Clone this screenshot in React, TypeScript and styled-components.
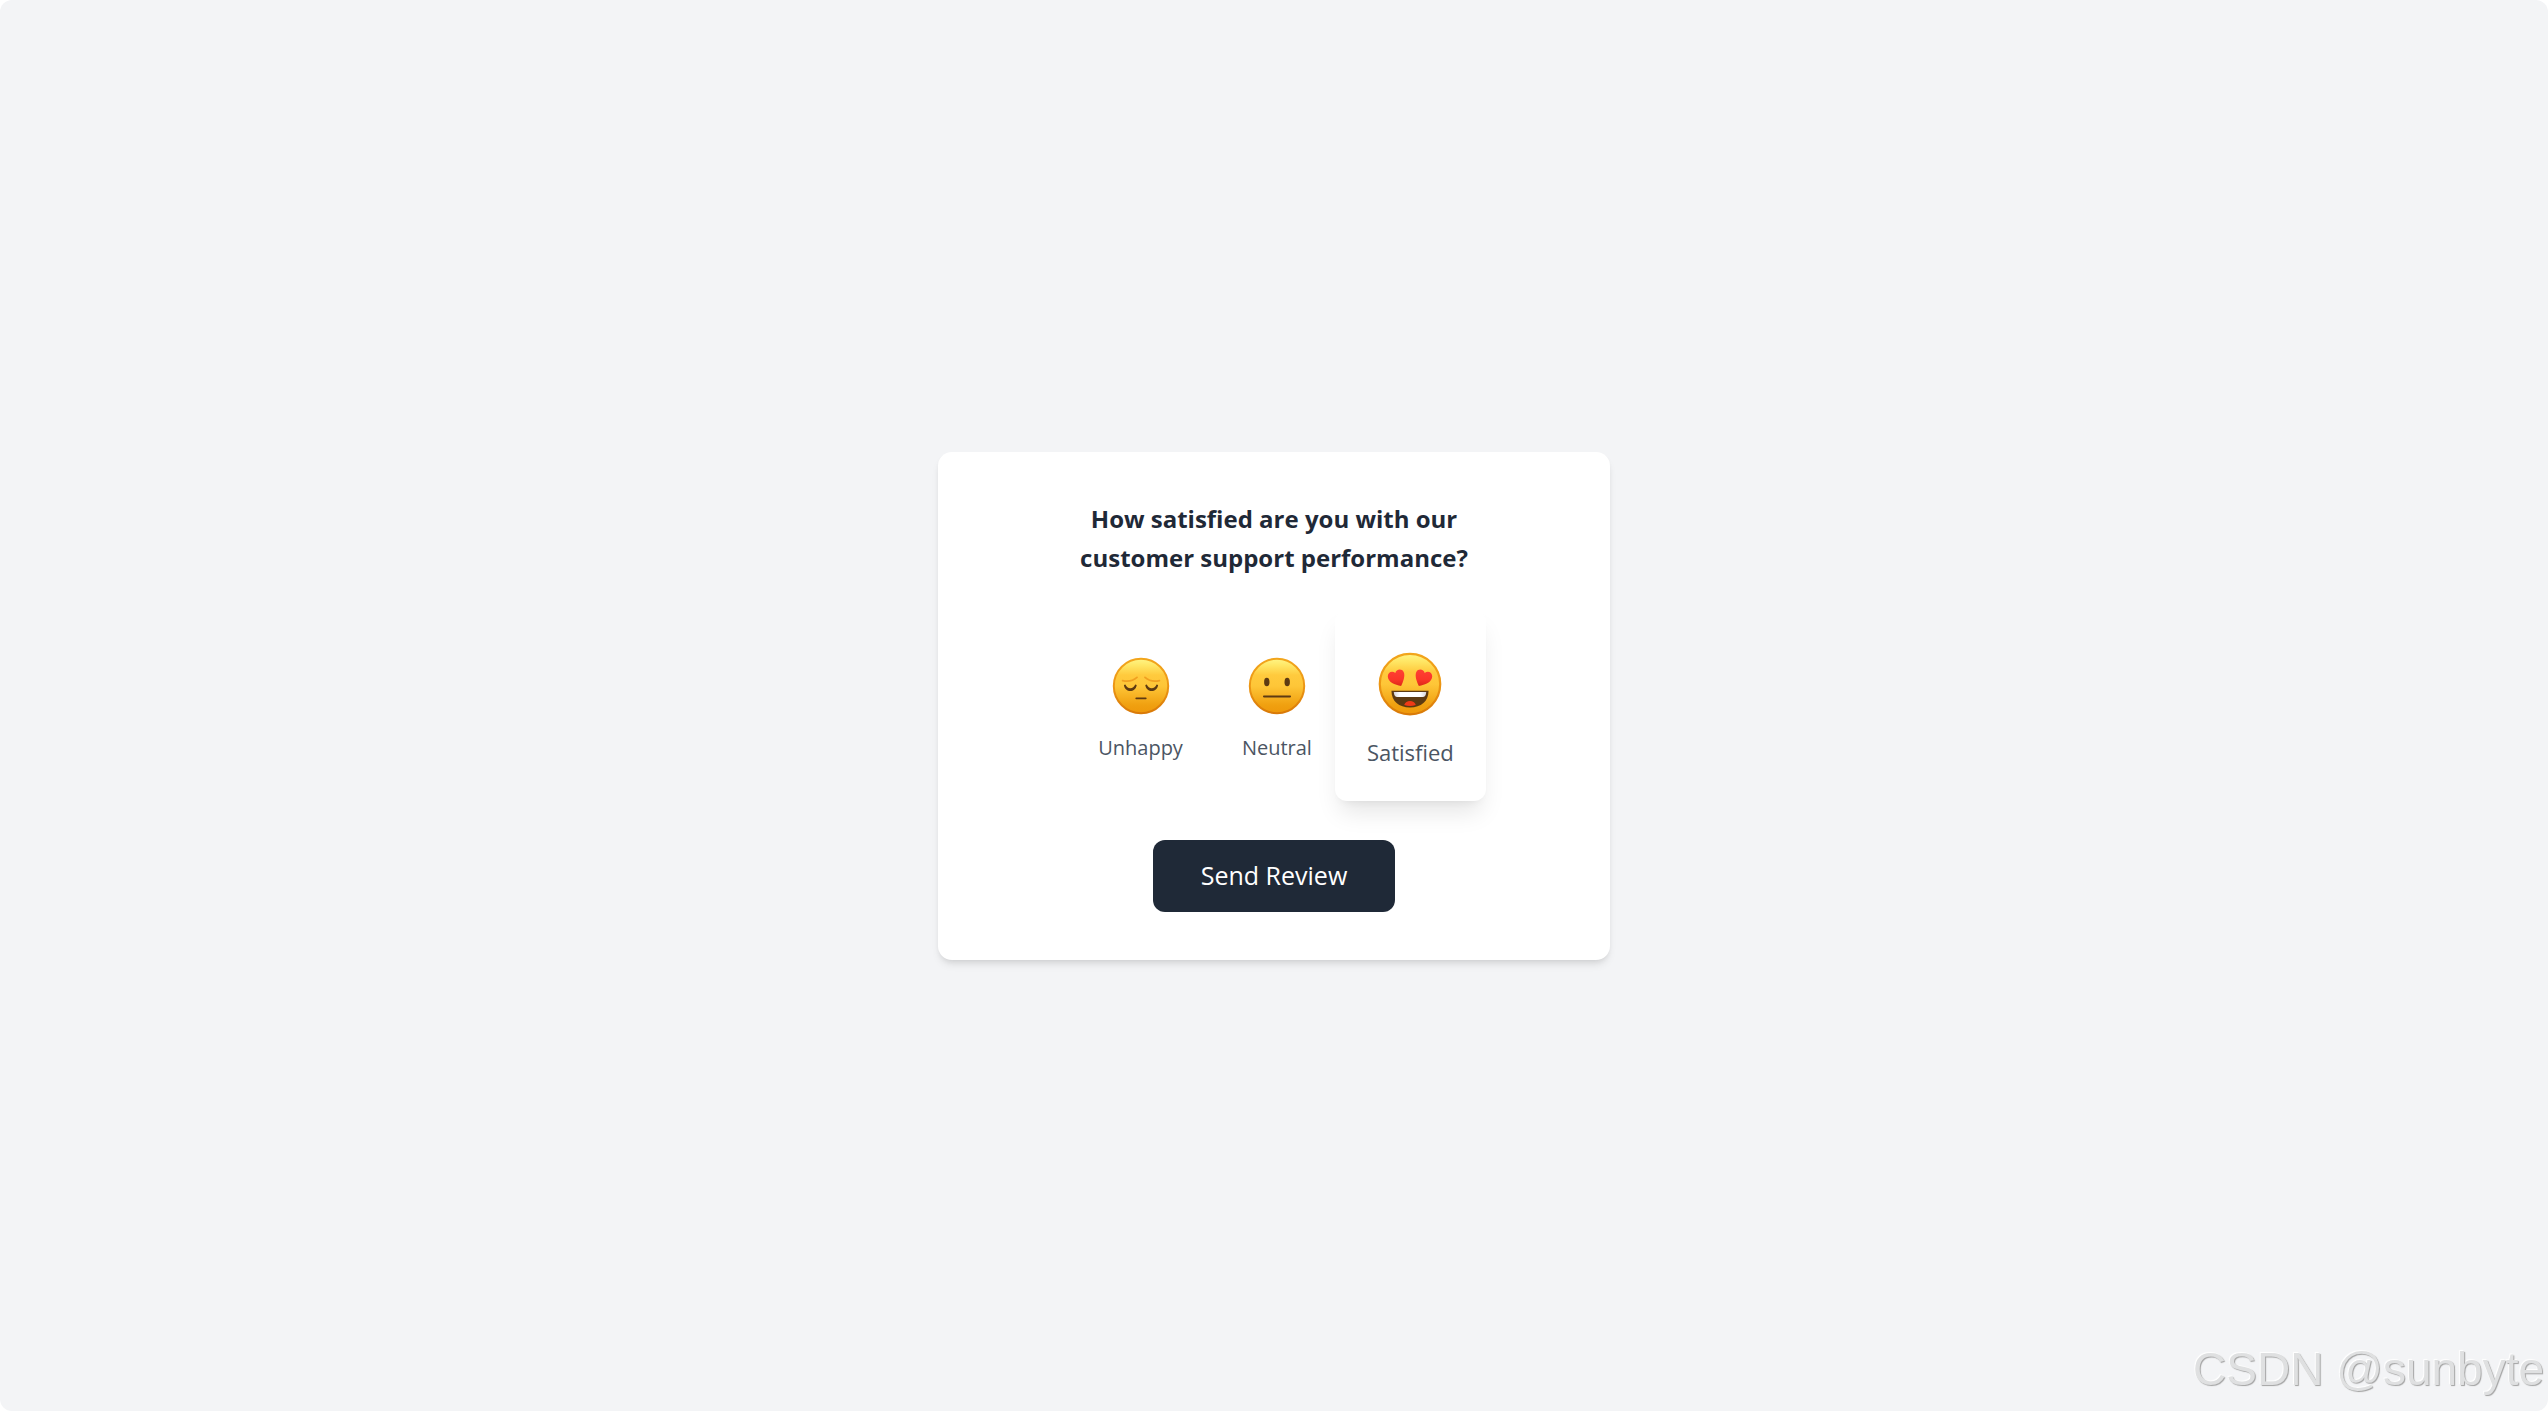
import React, { useState } from "react";
import styled, { createGlobalStyle } from "styled-components";

const GlobalStyle = createGlobalStyle`
  *, *::before, *::after { box-sizing: border-box; }
  body {
    margin: 0;
    background: #ffffff;
    font-family: "Segoe UI", "Open Sans", "Noto Sans", sans-serif;
  }
`;

const Page = styled.main`
  display: flex;
  align-items: center;
  justify-content: center;
  min-height: 100vh;
  background: #f3f4f6;
  border-radius: 12px;
`;

const Card = styled.form`
  display: flex;
  flex-direction: column;
  align-items: center;
  width: 100%;
  max-width: 672px;
  padding: 47px 48px 48px;
  border-radius: 14px;
  background: #ffffff;
  box-shadow: 0 6px 9px -2px rgba(0, 0, 0, 0.1), 0 3px 6px -3px rgba(0, 0, 0, 0.1);
`;

const Question = styled.h1`
  max-width: 420px;
  margin: 0 0 41px;
  color: #1f2937;
  font-size: 24px;
  font-weight: 700;
  line-height: 39px;
  text-align: center;
`;

const Ratings = styled.fieldset`
  display: flex;
  margin: 0 0 48px;
  padding: 0;
  border: 0;
`;

const HiddenRadio = styled.input`
  position: absolute;
  width: 1px;
  height: 1px;
  margin: 0;
  opacity: 0;
`;

const Rating = styled.label<{ $active: boolean }>`
  position: relative;
  display: flex;
  flex-direction: column;
  align-items: center;
  gap: 12px;
  margin: ${(p) => (p.$active ? "-9px -7px" : "0")};
  padding: ${(p) => (p.$active ? "34px 32px 32px" : "31px 29px 29px")};
  border-radius: 12px;
  background: ${(p) => (p.$active ? "#ffffff" : "transparent")};
  box-shadow: ${(p) =>
    p.$active ? "0 16px 25px -5px rgba(0, 0, 0, 0.1), 0 6px 10px -7px rgba(0, 0, 0, 0.1)" : "none"};
  color: #4b5563;
  font-size: ${(p) => (p.$active ? "22px" : "20px")};
  line-height: ${(p) => (p.$active ? "34px" : "30px")};
  cursor: pointer;
`;

const FaceSvg = styled.svg<{ $active: boolean }>`
  display: block;
  width: ${(p) => (p.$active ? "80px" : "72px")};
  height: ${(p) => (p.$active ? "80px" : "72px")};
`;

const SendButton = styled.button`
  padding: 17px 48px 19px;
  border: 0;
  border-radius: 12px;
  background: #1f2937;
  color: #ffffff;
  font-family: inherit;
  font-size: 25px;
  line-height: 36px;
  cursor: pointer;
`;

const Watermark = styled.span`
  position: fixed;
  right: 4px;
  bottom: 16px;
  color: #dfe0e1;
  font-family: "Liberation Sans", Arial, sans-serif;
  font-size: 46px;
  line-height: 52px;
  text-shadow: 1px 1px 1px #a2a2a2, -1px -1px 1px #ffffff;
`;

type Mood = "unhappy" | "neutral" | "satisfied";

const HEART =
  "M28 38.6C22.5 38 16 35.2 16 30C16 26.2 20 24.6 22.8 27C23.4 23.8 28.4 22.6 30.3 26C32 29.4 29.8 35 28 38.6Z";

const Features = ({ mood }: { mood: Mood }) => {
  if (mood === "unhappy") {
    return (
      <g>
        <path
          d="M17.6 31.6Q26 33.6 32 28.4M54.4 31.6Q46 33.6 40 28.4"
          fill="none"
          stroke="#f0a020"
          strokeWidth="1.8"
          strokeLinecap="round"
        />
        <path
          d="M18.9 36C20 44 30.6 44 31.7 36L30.2 35.6C28.5 40.4 22.1 40.4 20.4 35.6ZM40.3 36C41.4 44 52 44 53.1 36L51.6 35.6C49.9 40.4 43.5 40.4 41.8 35.6Z"
          fill="#5d3a12"
        />
        <rect x="30.4" y="48.4" width="11.2" height="1.9" rx="0.8" fill="#5d3a12" />
      </g>
    );
  }
  if (mood === "neutral") {
    return (
      <g fill="#5d3a12">
        <ellipse cx="25.8" cy="33" rx="2.7" ry="4.3" />
        <ellipse cx="46.2" cy="33" rx="2.7" ry="4.3" />
        <rect x="22" y="46.4" width="28" height="2" rx="0.8" />
      </g>
    );
  }
  return (
    <g>
      <path d={HEART} fill="url(#heart)" />
      <path d={HEART} fill="url(#heart)" transform="translate(72 0) scale(-1 1)" />
      <path d="M19.3 43H52.7C52.7 52.6 46 58 36 58S19.3 52.6 19.3 43Z" fill="#5d3a12" />
      <path d="M21.4 44.2H50.6C50.4 47.4 49.4 48.6 47.4 48.6H24.6C22.6 48.6 21.6 47.4 21.4 44.2Z" fill="url(#teeth)" />
      <path d="M30.8 55.9C32 51 40 51 41.2 55.9Q36 57.6 30.8 55.9Z" fill="#f03a17" />
    </g>
  );
};

const Face = ({ mood, active }: { mood: Mood; active: boolean }) => (
  <FaceSvg $active={active} viewBox="0 0 72 72" aria-hidden="true">
    <defs>
      <linearGradient id={`skin-${mood}`} x1="0" y1="0" x2="0" y2="1">
        <stop offset="0" stopColor="#fff585" />
        <stop offset="0.12" stopColor="#ffe766" />
        <stop offset="0.3" stopColor="#ffca3d" />
        <stop offset="0.5" stopColor="#fec638" />
        <stop offset="0.85" stopColor="#f0a010" />
        <stop offset="1" stopColor="#ee980a" />
      </linearGradient>
      <linearGradient id={`edge-${mood}`} x1="0" y1="0" x2="0" y2="1">
        <stop offset="0" stopColor="#f2a51c" />
        <stop offset="0.5" stopColor="#ec9614" />
        <stop offset="1" stopColor="#d97a08" />
      </linearGradient>
      <linearGradient id="heart" x1="0" y1="0" x2="0" y2="1">
        <stop offset="0" stopColor="#ff4034" />
        <stop offset="0.6" stopColor="#fb3529" />
        <stop offset="1" stopColor="#dc2a18" />
      </linearGradient>
      <linearGradient id="teeth" x1="0" y1="0" x2="1" y2="0">
        <stop offset="0" stopColor="#d5d5dc" />
        <stop offset="0.2" stopColor="#ffffff" />
        <stop offset="0.8" stopColor="#ffffff" />
        <stop offset="1" stopColor="#d5d5dc" />
      </linearGradient>
    </defs>
    <circle cx="36" cy="37" r="27.2" fill={`url(#skin-${mood})`} stroke={`url(#edge-${mood})`} strokeWidth="2" />
    <Features mood={mood} />
  </FaceSvg>
);

const OPTIONS: { mood: Mood; label: string }[] = [
  { mood: "unhappy", label: "Unhappy" },
  { mood: "neutral", label: "Neutral" },
  { mood: "satisfied", label: "Satisfied" },
];

export default function App() {
  const [selected, setSelected] = useState<Mood>("satisfied");

  return (
    <>
      <GlobalStyle />
      <Page>
        <Card onSubmit={(e) => e.preventDefault()}>
          <Question id="question">How satisfied are you with our customer support performance?</Question>
          <Ratings aria-labelledby="question">
            {OPTIONS.map(({ mood, label }) => (
              <Rating key={mood} $active={selected === mood} htmlFor={mood}>
                <HiddenRadio
                  id={mood}
                  type="radio"
                  name="rating"
                  value={mood}
                  checked={selected === mood}
                  onChange={() => setSelected(mood)}
                />
                <Face mood={mood} active={selected === mood} />
                {label}
              </Rating>
            ))}
          </Ratings>
          <SendButton type="submit">Send Review</SendButton>
        </Card>
      </Page>
      <Watermark>CSDN @sunbyte</Watermark>
    </>
  );
}
